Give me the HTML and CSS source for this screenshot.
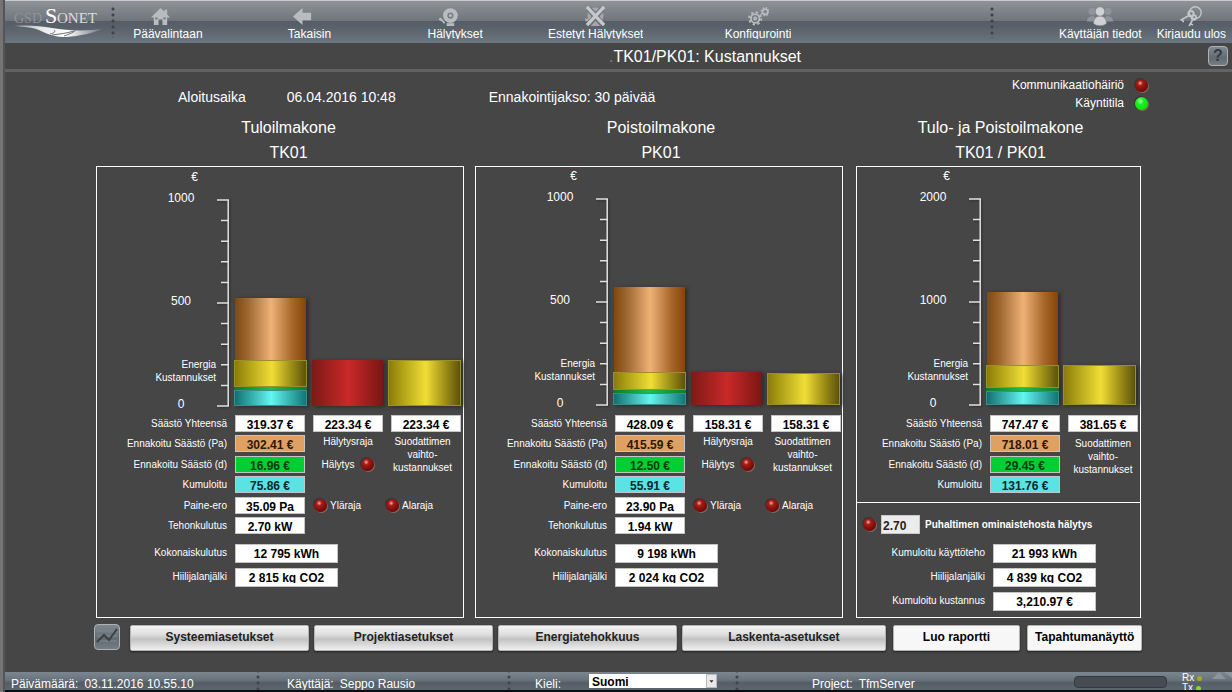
FILE: index.html
```html
<!DOCTYPE html>
<html lang="fi">
<head>
<meta charset="utf-8">
<meta name="viewport" content="width=device-width, initial-scale=1">
<title>TK01/PK01: Kustannukset</title>
<link rel="stylesheet" href="styles.css">
</head>
<body>
<svg class="defs" aria-hidden="true">
  <symbol id="axis" viewBox="0 0 12 208">
    <path d="M0 1H12M4 21.600H12M4 42.200H12M4 62.800H12M4 83.400H12M0 104H12M4 124.600H12M4 145.200H12M4 165.800H12M4 186.400H12M0 207H12M11.200 1V207" fill="none" stroke="#e2e2e2" stroke-width="1.500"/>
  </symbol>
</svg>
<div class="app">
  <header class="topbar">
    <div class="logo">
      <svg width="90" height="36" viewBox="0 0 90 36" role="img" aria-label="GSD Sonet">
        <defs><linearGradient id="wing" x1="0" x2="1"><stop offset="0" stop-color="#8a8f93"/><stop offset=".3" stop-color="#e8e8e8"/><stop offset=".6" stop-color="#fff"/><stop offset="1" stop-color="#6d7378"/></linearGradient></defs>
        <text x="0" y="17" class="logo__thin" font-size="14">GSD</text>
        <text x="31" y="17" class="logo__bold" font-size="22">S</text>
        <text x="43" y="17" class="logo__text" font-size="15">ONET</text>
        <path d="M0 20C14 19 26 20 38 22C54 25 74 25 88 23C80 27 66 30 52 31C42 31 36 29 27 25C20 21 10 21 0 20Z" fill="url(#wing)"/>
        <path d="M36 28C40 27 42 26 40 24M50 30C56 28 60 26 62 24M38 29C46 28 54 27 60 25" fill="none" stroke="#6d7378" stroke-width="1"/>
      </svg>
    </div>
    <span class="dots"></span>
    <nav class="nav" aria-label="Päävalikko">
      <a class="nav__item nav__item--shift" href="#">
        <svg class="nav__icon" viewBox="0 0 22 20"><path d="M11 1L1 11H4V19H9V13H13V19H18V11H21L18 8V3H15V5Z"/><path d="M5.500 11H8V13H5.500ZM14 11H16.500V13H14Z" fill="#6e747a"/></svg>
        <span class="caption">Päävalintaan</span></a>
      <a class="nav__item nav__item--shift" href="#">
        <svg class="nav__icon" viewBox="0 0 22 20"><path d="M1 10L11 1V6H20V14H11V19Z"/></svg>
        <span class="caption">Takaisin</span></a>
      <a class="nav__item nav__item--shift" href="#">
        <svg class="nav__icon" viewBox="0 0 22 20"><circle cx="13" cy="9" r="5.500" fill="none" stroke="#b9bcbf" stroke-width="4.500"/><circle cx="13" cy="9" r="1.600"/><path d="M2 12L7 17" stroke="#b9bcbf" stroke-width="2"/><circle cx="2.500" cy="13" r="1.500"/><path d="M9 17H17V20H9Z"/></svg>
        <span class="caption caption--cut">Hälytykset</span></a>
      <a class="nav__item" href="#">
        <svg class="nav__icon" viewBox="0 0 22 20"><circle cx="11" cy="9" r="6.500" fill="none" stroke="#a4a8ac" stroke-width="4"/><path d="M6 16H16V20H6ZM0 12H4V15H0Z" fill="#a4a8ac"/><path d="M4 2L18 18M18 2L4 18" stroke="#6e747a" stroke-width="6"/><path d="M2 0L20 19M20 0L2 19" stroke="#c6c8ca" stroke-width="3.500"/></svg>
        <span class="caption caption--cut">Estetyt Hälytykset</span></a>
      <a class="nav__item" href="#">
        <svg class="nav__icon" viewBox="0 0 22 20"><g fill="none" stroke="#b9bcbf"><circle cx="7.500" cy="12" r="4.500" stroke-width="2"/><circle cx="7.500" cy="12" r="6.400" stroke-width="2" stroke-dasharray="2.500 2.500"/><circle cx="7.500" cy="12" r="1.300" stroke-width="1.600"/><circle cx="18" cy="5" r="2.800" stroke-width="1.800"/><circle cx="18" cy="5" r="4.200" stroke-width="1.400" stroke-dasharray="1.700 1.600"/></g></svg>
        <span class="caption caption--cut">Konfigurointi</span></a>
    </nav>
    <span class="dots"></span>
    <nav class="user" aria-label="Käyttäjä">
      <a class="nav__item" href="#">
        <svg class="nav__icon nav__icon--wide" viewBox="0 0 26 20"><g fill="#8f959a"><circle cx="5" cy="5" r="3.500"/><circle cx="21" cy="5" r="3.500"/><path d="M0 15C0 8 10 8 10 15ZM16 15C16 8 26 8 26 15Z"/></g><g fill="#cfd1d3" stroke="#777d83" stroke-width=".6"><path d="M6.500 17C6.500 7 19.500 7 19.500 17C16 20 10 20 6.500 17Z"/><circle cx="13" cy="5" r="4.700"/></g></svg>
        <span class="caption caption--cut">Käyttäjän tiedot</span></a>
      <a class="nav__item" href="#">
        <svg class="nav__icon nav__icon--wide" viewBox="0 0 26 22"><g fill="none" stroke="#c3c6c8"><circle cx="17.500" cy="7" r="6.200" stroke-width="1.500"/><circle cx="13" cy="8" r="2.800" stroke-width="2"/><circle cx="16" cy="12" r="2.400" stroke-width="1.800"/><path d="M11 10L2 15M4 14L5 17M15 14L11 21M12 18L15 20" stroke-width="1.800"/></g></svg>
        <span class="caption caption--cut">Kirjaudu ulos</span></a>
    </nav>
  </header>

  <div class="titlebar">
    <h1 class="titlebar__text"><span class="titlebar__mark">.</span>TK01/PK01: Kustannukset</h1>
    <button class="tool tool--small" type="button" aria-label="Ohje">?</button>
  </div>

  <main class="main">
    <section class="info">
      <span class="info__start">Aloitusaika</span>
      <time class="info__date">06.04.2016 10:48</time>
      <span class="info__period">Ennakointijakso: 30 päivää</span>
      <ul class="status">
        <li class="status__item">Kommunikaatiohäiriö <i class="led"></i></li>
        <li class="status__item">Käyntitila <i class="led led--on"></i></li>
      </ul>
    </section>

    <div class="panels">
      <section class="unit unit--supply">
        <h2 class="unit__title">Tuloilmakone<br>TK01</h2>
        <div class="panel">
          <div class="chart">
            <div class="scale">
              <span class="scale__unit">€</span>
              <span class="scale__num">1000</span>
              <span class="scale__num">500</span>
              <span class="scale__caption">Energia<br>Kustannukset</span>
              <span class="scale__num">0</span>
            </div>
            <svg class="axis"><use href="#axis"/></svg>
            <div class="bars">
              <div class="bar"><i class="seg seg--brown" style="height:62px"></i><i class="seg seg--yellow" style="height:27px"></i><i class="seg seg--green" style="height:3px"></i><i class="seg seg--cyan" style="height:16px"></i></div>
              <div class="bar"><i class="seg seg--red" style="height:46px"></i></div>
              <div class="bar"><i class="seg seg--yellow" style="height:46px"></i></div>
            </div>
          </div>
          <div class="values">
            <label class="values__label" for="s1">Säästö Yhteensä</label><output class="value" id="s1">319.37 €</output>
            <output class="value" id="s1r" aria-labelledby="s1rl">223.34 €</output>
            <output class="value" id="s1f" aria-labelledby="s1fl">223.34 €</output>
            <label class="values__label" for="s2">Ennakoitu Säästö (Pa)</label><output class="value value--brown" id="s2">302.41 €</output>
            <label class="note" id="s1rl" for="s1r">Hälytysraja</label>
            <label class="note note--tall" id="s1fl" for="s1f">Suodattimen<br>vaihto-<br>kustannukset</label>
            <label class="values__label" for="s3">Ennakoitu Säästö (d)</label><output class="value value--green" id="s3">16.96 €</output>
            <span class="note note--led">Hälytys <i class="led"></i></span>
            <label class="values__label" for="s4">Kumuloitu</label><output class="value value--cyan" id="s4">75.86 €</output>
            <label class="values__label" for="s5">Paine-ero</label><output class="value" id="s5">35.09 Pa</output>
            <span class="limits"><span class="limit"><i class="led"></i>Yläraja</span><span class="limit"><i class="led"></i>Alaraja</span></span>
            <label class="values__label" for="s6">Tehonkulutus</label><output class="value" id="s6">2.70 kW</output>
          </div>
          <div class="totals">
            <label class="values__label" for="s7">Kokonaiskulutus</label><output class="value value--tall" id="s7">12 795 kWh</output>
            <label class="values__label" for="s8">Hiilijalanjälki</label><output class="value value--tall" id="s8"><span class="caption caption--cut">2 815 kg CO2</span></output>
          </div>
        </div>
      </section>

      <section class="unit unit--exhaust">
        <h2 class="unit__title">Poistoilmakone<br>PK01</h2>
        <div class="panel">
          <div class="chart">
            <div class="scale">
              <span class="scale__unit">€</span>
              <span class="scale__num">1000</span>
              <span class="scale__num">500</span>
              <span class="scale__caption">Energia<br>Kustannukset</span>
              <span class="scale__num">0</span>
            </div>
            <svg class="axis"><use href="#axis"/></svg>
            <div class="bars">
              <div class="bar"><i class="seg seg--brown" style="height:85px"></i><i class="seg seg--yellow" style="height:18px"></i><i class="seg seg--green" style="height:3px"></i><i class="seg seg--cyan" style="height:12px"></i></div>
              <div class="bar"><i class="seg seg--red" style="height:33px"></i></div>
              <div class="bar"><i class="seg seg--yellow" style="height:32px"></i></div>
            </div>
          </div>
          <div class="values">
            <label class="values__label" for="p1">Säästö Yhteensä</label><output class="value" id="p1">428.09 €</output>
            <output class="value" id="p1r" aria-labelledby="p1rl">158.31 €</output>
            <output class="value" id="p1f" aria-labelledby="p1fl">158.31 €</output>
            <label class="values__label" for="p2">Ennakoitu Säästö (Pa)</label><output class="value value--brown" id="p2">415.59 €</output>
            <label class="note" id="p1rl" for="p1r">Hälytysraja</label>
            <label class="note note--tall" id="p1fl" for="p1f">Suodattimen<br>vaihto-<br>kustannukset</label>
            <label class="values__label" for="p3">Ennakoitu Säästö (d)</label><output class="value value--green" id="p3">12.50 €</output>
            <span class="note note--led">Hälytys <i class="led"></i></span>
            <label class="values__label" for="p4">Kumuloitu</label><output class="value value--cyan" id="p4">55.91 €</output>
            <label class="values__label" for="p5">Paine-ero</label><output class="value" id="p5">23.90 Pa</output>
            <span class="limits"><span class="limit"><i class="led"></i>Yläraja</span><span class="limit"><i class="led"></i>Alaraja</span></span>
            <label class="values__label" for="p6">Tehonkulutus</label><output class="value" id="p6">1.94 kW</output>
          </div>
          <div class="totals">
            <label class="values__label" for="p7">Kokonaiskulutus</label><output class="value value--tall" id="p7">9 198 kWh</output>
            <label class="values__label" for="p8">Hiilijalanjälki</label><output class="value value--tall" id="p8"><span class="caption caption--cut">2 024 kg CO2</span></output>
          </div>
        </div>
      </section>

      <section class="unit unit--both">
        <h2 class="unit__title">Tulo- ja Poistoilmakone<br>TK01 / PK01</h2>
        <div class="panel">
          <div class="chart">
            <div class="scale">
              <span class="scale__unit">€</span>
              <span class="scale__num">2000</span>
              <span class="scale__num">1000</span>
              <span class="scale__caption">Energia<br>Kustannukset</span>
              <span class="scale__num">0</span>
            </div>
            <svg class="axis"><use href="#axis"/></svg>
            <div class="bars">
              <div class="bar"><i class="seg seg--brown" style="height:73px"></i><i class="seg seg--yellow" style="height:23px"></i><i class="seg seg--green" style="height:3px"></i><i class="seg seg--cyan" style="height:14px"></i></div>
              <div class="bar"><i class="seg seg--yellow" style="height:40px"></i></div>
            </div>
          </div>
          <div class="values">
            <label class="values__label" for="b1">Säästö Yhteensä</label><output class="value" id="b1">747.47 €</output>
            <output class="value" id="b1f" aria-labelledby="b1fl">381.65 €</output>
            <label class="values__label" for="b2">Ennakoitu Säästö (Pa)</label><output class="value value--brown" id="b2">718.01 €</output>
            <label class="note note--tall" id="b1fl" for="b1f">Suodattimen<br>vaihto-<br>kustannukset</label>
            <label class="values__label" for="b3">Ennakoitu Säästö (d)</label><output class="value value--green" id="b3">29.45 €</output>
            <label class="values__label" for="b4">Kumuloitu</label><output class="value value--cyan" id="b4">131.76 €</output>
          </div>
          <div class="alarm">
            <i class="led"></i>
            <input class="alarm__input" id="sfp" type="text" value="2.70">
            <label class="alarm__label" for="sfp">Puhaltimen ominaistehosta hälytys</label>
          </div>
          <div class="totals">
            <label class="values__label" for="b5">Kumuloitu käyttöteho</label><output class="value value--tall" id="b5">21 993 kWh</output>
            <label class="values__label" for="b6">Hiilijalanjälki</label><output class="value value--tall" id="b6"><span class="caption caption--cut">4 839 kg CO2</span></output>
            <label class="values__label" for="b7">Kumuloitu kustannus</label><output class="value value--tall" id="b7">3,210.97 €</output>
          </div>
        </div>
      </section>
    </div>

    <div class="actions">
      <button class="tool" type="button" aria-label="Trendi"><svg width="24" height="24" viewBox="0 0 24 24"><path d="M2 6H22M2 11H22M2 16H22" stroke="#808990"/><path d="M2 17L9 10L14 15L22 4" fill="none" stroke="#3c4045" stroke-width="2"/></svg></button>
      <button class="btn" type="button">Systeemiasetukset</button>
      <button class="btn" type="button">Projektiasetukset</button>
      <button class="btn" type="button">Energiatehokkuus</button>
      <button class="btn btn--wide" type="button">Laskenta-asetukset</button>
      <button class="btn btn--report" type="button">Luo raportti</button>
      <button class="btn btn--events" type="button">Tapahtumanäyttö</button>
    </div>
  </main>

  <footer class="footer">
    <div class="footer__cell footer__cell--date"><span class="caption">Päivämäärä:</span><span class="caption">03.11.2016 10.55.10</span></div>
    <div class="footer__cell"><span class="caption caption--cut">Käyttäjä:</span><span class="caption caption--cut">Seppo Rausio</span></div>
    <div class="footer__cell footer__cell--lang">
      <label class="caption" for="lang">Kieli:</label>
      <span class="picker"><select class="picker__select" id="lang"><option>Suomi</option></select><svg class="picker__arrow" width="11" height="14" viewBox="0 0 11 14"><path d="M3 6H8L5.500 9Z" fill="#333"/></svg></span>
    </div>
    <div class="footer__cell footer__cell--project">
      <span class="caption caption--cut">Project:</span><span class="caption">TfmServer</span>
      <span class="meter"></span>
      <span class="link"><span class="link__row">Rx <i class="link__dot"></i></span><span class="link__row">Tx <i class="link__dot link__dot--on"></i></span></span>
      <svg class="corner" width="20" height="18" viewBox="0 0 20 18"><path d="M0 7L7 0L14 7ZM12 0H20V6Z" fill="#8b949b"/></svg>
    </div>
  </footer>
</div>
</body>
</html>
```

FILE: styles.css
```css
* { box-sizing: border-box; }

body {
  margin: 0;
  background: #464646;
  color: #fff;
  font: 12px/14px "Liberation Sans", Arial, sans-serif;
}

h1, h2, ul { margin: 0; padding: 0; font-weight: normal; list-style: none; }
a { color: inherit; text-decoration: none; }
button, input, select { font: inherit; }
i { display: block; }

.defs { position: absolute; width: 0; height: 0; }

.app {
  display: flex;
  flex-direction: column;
  min-height: 100vh;
  padding-left: 5px;
  background: linear-gradient(90deg, #747474 3px, #555 3px 5px, transparent 5px);
}

.caption { display: block; line-height: 10px; white-space: nowrap; }
/* Descenders end just under the baseline */
.caption--cut { overflow: hidden; }

/* Top bar */
.topbar {
  display: flex;
  height: 43px;
  padding-top: 5px;
  border-top: 1px solid #c9cccc;
  background: linear-gradient(#8f9397, #6f757b 20px, #565c64 20px, #59616a 26px, #6b7680);
}
.logo { width: 106px; padding-left: 9px; }
.logo__thin, .logo__text, .logo__bold { font-family: "Liberation Serif", serif; fill: #8f9396; }
.logo__text { fill: #dcdddf; }
.logo__bold { fill: #fff; }
.dots {
  width: 4px;
  height: 32px;
  background: radial-gradient(circle, #3f444a 0 1px, transparent 2px) 0 0 / 4px 6px;
}
.nav {
  flex: 1;
  display: grid;
  grid-template-columns: 105fr 176fr 113fr 166fr 156fr 152fr;
}
.nav__item { display: flex; flex-direction: column; align-items: center; gap: 2px; }
.nav__icon { width: 21px; height: 21px; fill: #b9bcbf; }
.nav__icon--wide { width: 26px; }
.nav__item--shift .nav__icon { margin-right: 14px; }
.user { display: flex; gap: 15px; padding: 0 6px 0 65px; }

/* Title */
.titlebar {
  display: flex;
  align-items: flex-start;
  height: 29px;
  padding: 3px 4px 0 197px;
  border-bottom: 3px solid #636363;
}
.titlebar__text { flex: 1; text-align: center; font-size: 16px; line-height: 22px; }
.titlebar__mark { color: #888; }
.tool {
  width: 26px;
  height: 26px;
  margin-right: 5px;
  padding: 0;
  border: 1px solid #aeb2b5;
  border-radius: 4px;
  background: linear-gradient(#7f878f, #626a72 60%, #757d85);
}
.tool svg { display: block; }
.tool--small {
  width: 20px;
  height: 20px;
  margin: 0;
  color: #343a42;
  font-weight: bold;
  font-size: 16px;
  line-height: 16px;
}

/* Start time and link state */
.info { display: flex; height: 43px; padding: 4px 84px 0 173px; font-size: 14px; line-height: 42px; }
.info__start { margin-right: 41px; }
.info__date { margin-right: 93px; }
.status { margin-left: auto; font-size: 12px; line-height: 18px; }
.status__item { display: flex; justify-content: flex-end; align-items: center; gap: 11px; }

.led {
  flex: none;
  width: 13px;
  height: 13px;
  border-radius: 50%;
  background: radial-gradient(circle at 40% 32%, #e9b3ae 0, #a81c17 22%, #7b0d0b 60%, #5a0504);
  box-shadow: 1px 1px 0 #87675f, -1px -1px 0 #333;
}
.led--on { background: radial-gradient(circle at 40% 32%, #b6ffb6 0, #17f01b 30%, #06e00c); }

/* Panels */
.panels {
  display: grid;
  grid-template-columns: 368fr 368fr 287fr;
  gap: 11px;
  padding: 0 91px;
}
.unit { display: flex; flex-direction: column; }
.unit--both { margin-left: 2px; }
.unit__title { padding: 0 0 1px 4px; text-align: center; font-size: 16px; line-height: 25px; }
.unit--supply .unit__title { padding-left: 17px; }
.panel { flex: 1; padding-bottom: 6px; border: 1px solid #fff; }

.chart { display: flex; height: 248px; }
.unit--supply .chart { padding-top: 1px; }
.unit--both .chart { padding-right: 2px; }
.scale {
  flex: 1;
  display: grid;
  grid-template-rows: 21px 103px 64px 39px 14px;
  justify-items: end;
  padding: 2px 1px 0 0;
  align-content: start;
}
.scale__unit { margin-right: 18px; }
.scale__num { width: 28px; margin-right: 21px; text-align: center; }
.scale__caption { font-size: 10px; line-height: 13px; text-align: right; }
.axis { width: 12px; height: 208px; margin-top: 31px; filter: drop-shadow(1px 1px 1px #2b2b2b); }
.bars { display: flex; align-items: flex-end; gap: 4px; height: 238px; padding: 0 2px 0 5px; }
.bar { width: 73px; filter: drop-shadow(2px 1px 2px #2a2a2a); }
.seg { margin: 0 1px; }
.seg--brown { background: linear-gradient(90deg, #80470f, #a26a35 20%, #efb276 51%, #a8682c 80%, #854509); }
.seg--yellow { margin: 0; border: 1px solid #9a8f2a; background: linear-gradient(90deg, #8a7b0d, #a99a15 15%, #f0de35 52%, #9a8b16 80%, #5d530b); }
.seg--green { margin: 0; background: linear-gradient(90deg, #0c7a2c, #1cc04a 50%, #0c7a2c); }
.seg--cyan { margin: 0; border: 1px solid #3a8f8c; background: linear-gradient(90deg, #117070, #62f6f2 51%, #117676); }
.seg--red { background: linear-gradient(90deg, #7c1a16, #c92929 51%, #7a1613); }

/* Readings */
.values {
  display: grid;
  grid-template-columns: 1fr 70px 70px 70px;
  grid-template-rows: 20px 21px 20px 21px 20px 21px;
  column-gap: 8px;
  padding-right: 2px;
}
.unit--exhaust .values { padding-right: 1px; }
.unit--both .values { grid-template-columns: 1fr 70px 70px; grid-template-rows: 20px 21px 20px 21px; }
.values__label { grid-column: 1; text-align: right; font-size: 10px; line-height: 17px; white-space: nowrap; }
.value {
  display: block;
  height: 17px;
  padding-top: 4px;
  border: 1px solid #c4c4c4;
  background: #fff;
  color: #000;
  font-weight: bold;
  line-height: 10px;
  text-align: center;
}
.value--brown { background: #dfa064; color: #2e1700; }
.value--green { background: #00ce35; color: #063c10; }
.value--cyan { background: #5be3e3; color: #06292b; }
.value--tall { height: 19px; }

.note { font-size: 10px; line-height: 13px; text-align: center; }
.note--tall { grid-column: 4; grid-row: 2 / 5; margin-right: 7px; white-space: nowrap; }
.unit--both .note--tall { grid-column: 3; padding-top: 2px; margin: 0; }
.note--led { display: flex; justify-content: center; gap: 7px; height: 17px; align-items: center; }
.limits { grid-column: 3 / 5; display: flex; align-items: center; height: 17px; padding-left: 1px; }
.limit { display: flex; align-items: center; gap: 3px; width: 72px; font-size: 10px; line-height: 13px; }

.totals {
  display: grid;
  grid-template-columns: 1fr 103px;
  gap: 5px 8px;
  margin-top: 6px;
  padding-right: 125px;
}
.unit--exhaust .totals { padding-right: 124px; }
.unit--both .totals { margin-top: 10px; padding-right: 44px; }

.alarm {
  display: flex;
  align-items: center;
  gap: 5px;
  margin-top: 5px;
  padding: 12px 0 0 6px;
  border-top: 1px solid #fff;
}
.alarm__input {
  width: 39px;
  height: 19px;
  padding: 2px 1px 0;
  border: 1px solid #c9c9c9;
  background: #ececec;
  color: #222;
  font-weight: bold;
}
.alarm__label { font-size: 10px; font-weight: bold; white-space: nowrap; }

/* Buttons */
.actions { display: flex; gap: 5px; padding: 6px 90px 20px 89px; }
.btn {
  flex: 179 1 0;
  height: 26px;
  margin-top: 1px;
  padding: 0 0 2px;
  border: 1px solid #b4b4b4;
  border-radius: 2px;
  background: linear-gradient(#f4f4f4, #dedede 35%, #c2c2c2 55%, #dcdcdc 80%, #efefef);
  box-shadow: 0 1px 2px #222;
  color: #222;
  font-weight: bold;
  white-space: nowrap;
}
.btn--wide { flex-grow: 204; }
.btn--report, .btn--events { margin-left: 2px; background: #f7f7f7; color: #000; }
.btn--report { flex-grow: 127; }
.btn--events { flex-grow: 114; }

/* Status bar */
.footer {
  display: grid;
  grid-template-columns: 251fr 251fr 228fr 497fr;
  height: 20px;
  margin-top: auto;
  overflow: hidden;
  border-bottom: 2px solid #0c0c0c;
  background: linear-gradient(#7b8790, #68737c 45%, #545d66 60%, #5d6770);
}
.footer__cell {
  display: flex;
  gap: 6px;
  padding: 7px 0 0 31px;
  height: 18px;
}
.footer__cell + .footer__cell {
  background: radial-gradient(circle, #3f464d 0 1px, transparent 2px) 0 2px / 4px 6px repeat-y;
}
.footer__cell--date { padding-left: 6px; }
.footer__cell--lang { gap: 28px; padding-left: 28px; }
.footer__cell--project { padding: 7px 0 0 77px; }
.picker { display: flex; width: 128px; height: 14px; margin-top: -5px; background: #fff; }
.picker__select {
  flex: 1;
  height: 14px;
  padding: 3px 3px 0;
  border: 0;
  appearance: none;
  background: #fff;
  color: #000;
  font-weight: bold;
  line-height: 11px;
}
.picker__arrow { border: 1px solid #bbb; background: #e8e8e8; }
.meter {
  width: 93px;
  height: 12px;
  margin: -3px 9px 0 auto;
  border: 1px solid #353a40;
  border-radius: 4px;
  background: #454c53;
}
.link { width: 24px; margin-top: -6px; font-size: 10px; line-height: 10px; }
.link__row { display: flex; align-items: center; gap: 3px; }
.link__dot { width: 5px; height: 5px; border-radius: 50%; background: #a5a827; }
.link__dot--on { background: #7be010; }
.corner { margin-top: -7px; }
```
